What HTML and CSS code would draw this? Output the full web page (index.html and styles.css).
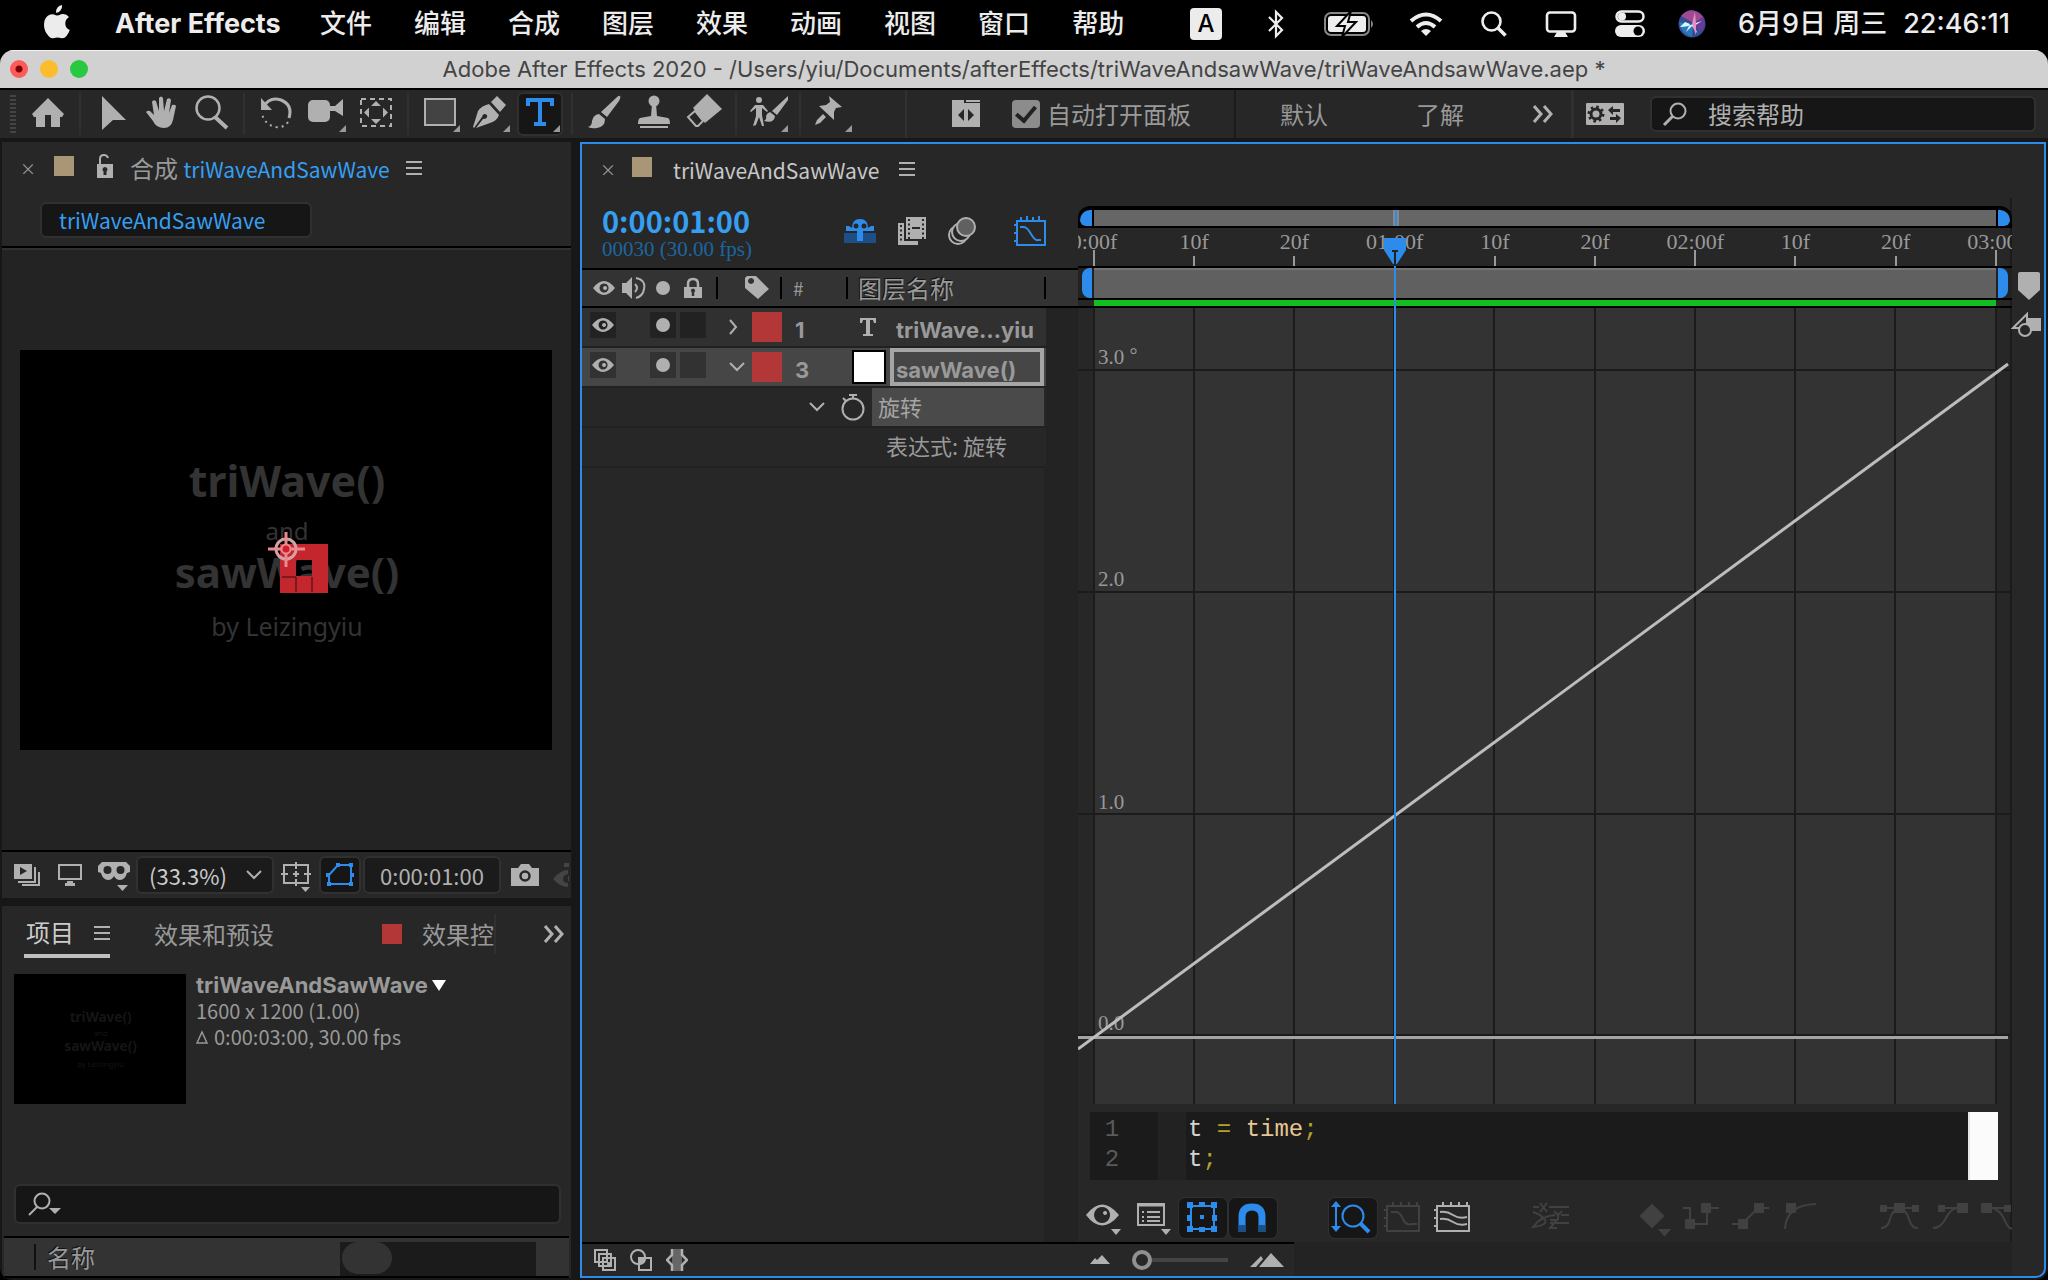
FILE: index.html
```html
<!DOCTYPE html>
<html lang="zh-CN">
<head>
<meta charset="utf-8">
<title>Adobe After Effects 2020</title>
<link rel="stylesheet" href="styles.css">
</head>
<body>
<nav class="menubar" aria-label="系统菜单">
  <svg class="apple" width="28" height="34" viewBox="0 0 28 34"><path d="M19 0q.5 3-1.500 5.500Q15.500 8 13 7.800q-.3-3 1.500-5.300Q16.500.2 19 0zM14 10.500q1.500 0 4-1.200 5-1.300 8 2.700-4 2.500-3.700 7 .4 4.500 4.500 6-1.300 3.500-3.300 6-2 2.500-4.500 2.300-3-.9-4.500-.9t-4.500.9q-2.500.2-4.500-2.300Q1 26 1 20q0-6 3.500-9 3-2.500 6.500-1.500 2 1 3 1z" fill="#ececec"/></svg>
  <a class="app-name" href="#">After Effects</a>
  <div class="menus">
    <a href="#">文件</a><a href="#">编辑</a><a href="#">合成</a><a href="#">图层</a><a href="#">效果</a><a href="#">动画</a><a href="#">视图</a><a href="#">窗口</a><a href="#">帮助</a>
  </div>
  <div class="status">
    <span class="input-source">A</span>
    <svg width="20" height="30" viewBox="0 0 20 30" fill="none" stroke="#eee" stroke-width="2.200"><path d="M3 8l13 13-6 6V3l6 6L3 22"/></svg>
    <svg class="battery" width="52" height="26" viewBox="0 0 52 26"><rect x="1" y="2" width="44" height="22" rx="6" fill="none" stroke="#888" stroke-width="2"/><rect x="4" y="5" width="38" height="16" rx="3" fill="#eee"/><path d="M47 9q4 4 0 8z" fill="#888"/><path d="M27 0L13 15h8l-3 11L32 11h-8z" fill="#eee" stroke="#000" stroke-width="2"/></svg>
    <svg width="34" height="24" viewBox="0 0 34 24" fill="none" stroke="#eee" stroke-width="4"><path d="M2 9q15-13 30 0M8 15q9-8 18 0"/><path d="M12 19q5-4 10 0l-5 5z" fill="#eee" stroke="none"/></svg>
    <svg width="26" height="26" viewBox="0 0 26 26" fill="none" stroke="#eee" stroke-width="2.600"><circle cx="10.500" cy="10.500" r="9"/><path d="M17 17l7.500 7.500" stroke-width="3.500"/></svg>
    <svg width="32" height="26" viewBox="0 0 32 26"><rect x="2" y="1.500" width="28" height="19" rx="3" fill="none" stroke="#eee" stroke-width="2.600"/><path d="M12 21h8l3 5H9z" fill="#eee"/></svg>
    <svg class="control" width="30" height="28" viewBox="0 0 30 28"><rect x="1.500" y="1.500" width="27" height="10" rx="5" fill="none" stroke="#eee" stroke-width="2.500"/><circle cx="7" cy="6.500" r="4" fill="#eee"/><rect x="0" y="15" width="30" height="12" rx="6" fill="#eee"/><circle cx="23" cy="21" r="4.500" fill="#000"/></svg>
    <svg width="28" height="28" viewBox="0 0 28 28"><circle cx="14" cy="14" r="13.500" fill="#354c92"/><path d="M3 6Q14-6 25 7L16 13z" fill="#a04a92"/><path d="M25 7q4 8-3 15l-7-8z" fill="#6a3a94"/><path d="M1 12q2 12 13 15l1-12z" fill="#2878bc"/><path d="M2 17q8 0 13-3l9-3-8 5 4 8-6-8-6 6 4-8-5-2z" fill="#d8fbff"/><path d="M14 14L17 2l1 12 0 11z" fill="#e690c8"/></svg>
    <span class="clock">6月9日 周三</span>
    <span class="clock time">22:46:11</span>
  </div>
</nav>

<div class="window">
  <header class="titlebar">
    <button class="light red" aria-label="关闭"></button><button class="light yellow" aria-label="最小化"></button><button class="light green" aria-label="缩放"></button>
    <h1>Adobe After Effects 2020 - /Users/yiu/Documents/afterEffects/triWaveAndsawWave/triWaveAndsawWave.aep *</h1>
  </header>

  <div class="toolbar">
    <span class="grip"></span>
    <button class="tool" aria-label="主页"><svg viewBox="0 0 40 40"><path d="M20 4l16 16-2 3h-2v10h-9V21h-6v12H8V23H6l-2-3z"/></svg></button>
    <span class="sep"></span>
    <button class="tool" aria-label="选取"><svg viewBox="0 0 40 40"><path d="M10 2l24 24H21L10 36z"/></svg></button>
    <button class="tool" aria-label="手形"><svg viewBox="0 0 40 40"><path d="M4 18q3-3 6 1l2 2L10 8q1-3 4-1l3 10V4q2-3 4 0l1 13 3-12q3-2 4 1l-2 13 3-8q3-1 4 1l-3 14q-2 8-9 8-8 0-11-7z"/></svg></button>
    <button class="tool" aria-label="缩放"><svg viewBox="0 0 40 40" class="line"><circle cx="16" cy="14" r="11.500" stroke-width="2.500"/><path d="M23 23l12 11" stroke-width="4"/></svg></button>
    <span class="sep"></span>
    <button class="tool" aria-label="旋转"><svg viewBox="0 0 40 40"><path d="M7 13Q14 2 25 6q12 5 8 18" fill="none" stroke="#b0b0b0" stroke-width="3"/><path d="M5 4v12h11z"/><path d="M32 28q-4 6-12 5Q9 31 6 20" fill="none" stroke="#b0b0b0" stroke-width="2" stroke-dasharray="2 4"/></svg></button>
    <button class="tool" aria-label="摄像机"><svg viewBox="0 0 40 40"><rect x="2" y="6" width="22" height="22" rx="5"/><path d="M24 12h5l8-7v17l-8-5h-5z"/><path class="fly" d="M40 31v7h-7z"/></svg></button>
    <button class="tool" aria-label="向后平移"><svg viewBox="0 0 40 40"><rect x="5" y="5" width="30" height="27" fill="none" stroke="#b0b0b0" stroke-width="2" stroke-dasharray="5 4"/><path d="M20 7l5 5H15zM20 30l5-5H15zM8 18.500l5-5v10zM32 18.500l-5-5v10z"/></svg></button>
    <span class="sep"></span>
    <button class="tool" aria-label="矩形"><svg viewBox="0 0 40 40"><rect x="5" y="5" width="30" height="26" fill="#434343" stroke="#b0b0b0" stroke-width="2"/><path class="fly" d="M40 31v7h-7z"/></svg></button>
    <button class="tool" aria-label="钢笔"><svg viewBox="0 0 40 40"><path d="M3 33L8 17q3-5 11-7l10 11q-2 6-9 8L6 34l7-9q5 0 4-4-4-3-5 2L4 34z"/><path d="M21 8l6-6 9 9-6 7z"/><path class="fly" d="M40 31v7h-7z"/></svg></button>
    <button class="tool active" aria-label="文字"><svg viewBox="0 0 40 40"><path d="M6 4h28v8h-4V8h-8v20h4v4H14v-4h4V8h-8v4H6z" fill="#2d8ceb"/><path class="fly" d="M40 31v7h-7z"/></svg></button>
    <span class="sep"></span>
    <button class="tool" aria-label="画笔"><svg viewBox="0 0 40 40"><path d="M36 2q1 1-1 5L23 23l-6-5L32 4q3-3 4-2zM15 20l6 5q0 8-8 9-5 1-9-1 4-1 4-6 1-6 7-7z"/></svg></button>
    <button class="tool" aria-label="仿制图章"><svg viewBox="0 0 40 40"><circle cx="20" cy="7" r="5.500"/><path d="M18 10h4l1 12 11 2q2 1 2 6H4q0-5 2-6l11-2zM6 32h28v2H6z"/></svg></button>
    <button class="tool" aria-label="橡皮擦"><svg viewBox="0 0 40 40"><path d="M23 0l15 15-17 14L9 14z"/><path d="M11 17l8 10-5 5h-2l-8-9z" fill="none" stroke="#b0b0b0" stroke-width="2"/></svg></button>
    <span class="sep"></span>
    <button class="tool" aria-label="Roto 笔刷"><svg viewBox="0 0 40 40"><circle cx="11" cy="6" r="3"/><path d="M2 17l5-6h8l5 6-1 1-5-4v7l2 11h-2l-3-9-3 8-3 1 3-10v-8l-5 4zM40 2v4L29 21l-5-4zM22 18l5 4q-1 8-11 5 3-2 2-5 1-3 4-4z"/><path class="fly" d="M40 31v7h-7z"/></svg></button>
    <span class="sep"></span>
    <button class="tool" aria-label="人偶位置控点"><svg viewBox="0 0 40 40"><path d="M17 2l13 11-6 1-2 4 0 8L7 12l7-1 4-3zM3 31l2-5 6-6 3 3-6 6z"/><path class="fly" d="M40 31v7h-7z"/></svg></button>
    <span class="sep wide"></span>
    <button class="tool small" aria-label="面板"><svg viewBox="0 0 40 40"><path d="M6 6h12v3h16v24H6zM20 6h14v2H20z"/><path d="M18 15v12l-6-6zM22 15v12l6-6z" fill="#272727"/></svg></button>
    <label class="check"><input type="checkbox" checked><span>自动打开面板</span></label>
    <div class="workspaces">
      <button>默认</button><button class="learn">了解</button>
      <button aria-label="更多"><svg width="22" height="18" viewBox="0 0 22 18" fill="none" stroke="#b0b0b0" stroke-width="3"><path d="M2 1l7 8-7 8M12 1l7 8-7 8"/></svg></button>
    </div>
    <button class="sync" aria-label="同步设置"><svg width="38" height="22" viewBox="0 0 38 22"><rect width="38" height="22" rx="1" fill="#b0b0b0"/><circle cx="10" cy="11" r="5" fill="none" stroke="#272727" stroke-width="3"/><circle cx="10" cy="11" r="7" fill="none" stroke="#272727" stroke-width="3" stroke-dasharray="2.500 3"/><path d="M22 7l5-4v3h7v3h-7v3zM35 15l-5-4v3h-6v3h6v3z" fill="#272727"/></svg></button>
    <label class="help-search"><svg width="26" height="26" viewBox="0 0 26 26" fill="none" stroke="#b0b0b0"><circle cx="16" cy="10" r="7.500" stroke-width="2"/><path d="M11 15L2 24" stroke-width="3"/></svg><input type="text" value="搜索帮助" aria-label="搜索帮助"></label>
  </div>

  <main class="workspace">
    <div class="left">
      <section class="panel comp">
        <div class="tabs">
          <button class="close" aria-label="关闭">×</button><span class="swatch tan"></span>
          <svg class="lock" width="18" height="26" viewBox="0 0 18 26"><path d="M4 12V6q0-4 4-4 3 0 4 3" fill="none" stroke="#b0b0b0" stroke-width="2"/><path d="M1 11h16v14H1z" fill="#b0b0b0"/><path d="M9 14a2.500 2.500 0 0 1 1.500 4.500V22h-3v-3.500A2.500 2.500 0 0 1 9 14z" fill="#272727"/></svg>
          <span class="tab-title">合成 <b>triWaveAndSawWave</b></span>
          <button class="burger" aria-label="面板菜单"></button>
        </div>
        <div class="crumbs"><button>triWaveAndSawWave</button></div>
        <div class="viewer">
          <svg class="canvas" viewBox="0 0 532 400" font-family="Noto Sans" text-anchor="middle">
            <rect width="532" height="400"/>
            <g fill="#333">
              <text x="267" y="147" font-size="43" font-weight="700">triWave()</text>
              <text x="267" y="190" font-size="24">and</text>
              <text x="267" y="238" font-size="42" font-weight="700">sawWave()</text>
              <text x="267" y="286" font-size="25">by Leizingyiu</text>
            </g>
            <path d="M260 194h48v49h-48zM276 210v16h16v-16z" fill="#c4262e" fill-rule="evenodd"/>
            <path d="M262 227h14v15M292 227v15" fill="none" stroke="#3a0a0c"/>
            <g fill="none" stroke="#e88a8e" stroke-width="2"><circle cx="266" cy="199" r="10" stroke="#d8a0a2" stroke-width="3"/><circle cx="266" cy="199" r="4.500" fill="#d01f28"/><path d="M266 182v13M266 203v14M248 199h13M271 199h14" stroke-width="3"/></g>
          </svg>
        </div>
        <div class="viewer-bar">
          <button aria-label="始终预览"><svg width="26" height="22" viewBox="0 0 26 22"><path d="M0 0h18v15H0z" fill="#b0b0b0"/><path d="M6 3l7 4-7 4z" fill="#272727"/><path d="M20 4h1v14H4M25 8v13H8" fill="none" stroke="#b0b0b0" stroke-width="2"/></svg></button>
          <button aria-label="主查看器"><svg width="24" height="22" viewBox="0 0 24 22"><path d="M1 1h22v14H1z" fill="none" stroke="#b0b0b0" stroke-width="2"/><path d="M9 17h6v2h2v3H7v-3h2z" fill="#b0b0b0"/></svg></button>
          <button class="drop goggles" aria-label="3D 眼镜"><svg width="32" height="30" viewBox="0 0 32 30"><path d="M4 0h24l4 4v6l-3 1q-2 7-7 7-4 0-6-4-2 4-6 4-5 0-7-7l-3-1V4z" fill="#b0b0b0"/><circle cx="9.500" cy="8" r="4" fill="#272727"/><circle cx="22.500" cy="8" r="4" fill="#272727"/><path d="M19 23h11l-5.500 6z" fill="#b0b0b0"/></svg></button>
          <label class="zoom"><select aria-label="放大率"><option>(33.3%)</option></select><svg width="16" height="10" viewBox="0 0 16 10" fill="none" stroke="#b0b0b0" stroke-width="2"><path d="M1 1l7 7 7-7"/></svg></label>
          <button class="drop" aria-label="网格和参考线"><svg width="30" height="32" viewBox="0 0 30 32" fill="none" stroke="#b0b0b0" stroke-width="2"><path d="M3 3h24v18H3zM15 0v7M15 17v7M0 12h7M23 12h7M12 12h6M15 9v6"/><path d="M20 25h9l-4.500 5z" fill="#b0b0b0" stroke="none"/></svg></button>
          <button class="boxed" aria-label="蒙版可见性"><svg width="28" height="24" viewBox="0 0 28 24"><path d="M3 21V12L12 2h13v19z" fill="none" stroke="#2d8ceb" stroke-width="2"/><path d="M10 0h4v4h-4zM23 0h4v4h-4zM0 10h4v4H0zM24 10h4v4h-4zM1 19h4v4H1zM23 19h4v4h-4z" fill="#2d8ceb"/></svg></button>
          <button class="preview-time">0:00:01:00</button>
          <button aria-label="快照"><svg width="28" height="22" viewBox="0 0 28 22"><path d="M0 4h7l3-4h8l3 4h7v18H0z" fill="#b0b0b0"/><circle cx="14" cy="12" r="4.500" fill="none" stroke="#272727" stroke-width="2.500"/></svg></button>
          <svg class="faded" width="16" height="24" viewBox="0 0 16 24"><path d="M0 16q7-9 15-9v4q-5 1-5 5t5 4v4Q7 24 0 16zM11 0h5v4h-5zM15 13h1v5h-1z" fill="#444"/></svg>
        </div>
      </section>

      <section class="panel project">
        <div class="project-tabs">
          <button class="ptab current">项目 <span class="burger"></span></button>
          <button class="ptab">效果和预设</button>
          <button class="ptab clipped"><span class="swatch red"></span>效果控</button>
          <button class="more" aria-label="更多"><svg width="22" height="18" viewBox="0 0 22 18" fill="none" stroke="#b0b0b0" stroke-width="3"><path d="M2 1l7 8-7 8M12 1l7 8-7 8"/></svg></button>
        </div>
        <div class="info">
          <svg class="thumb" viewBox="0 0 532 400" font-family="Noto Sans" text-anchor="middle"><rect width="532" height="400"/><g fill="#151515"><text x="268" y="147" font-size="42" font-weight="700">triWave()</text><text x="268" y="190" font-size="24">and</text><text x="268" y="238" font-size="42" font-weight="700">sawWave()</text><text x="268" y="286" font-size="24">by Leizingyiu</text></g></svg>
          <div class="meta"><strong>triWaveAndSawWave<i class="caret"></i></strong><span>1600 x 1200 (1.00)</span><span><svg width="12" height="14" viewBox="0 0 12 14"><path d="M1 13L6 2l5 11z" fill="none" stroke="#999" stroke-width="1.500"/></svg> 0:00:03:00, 30.00 fps</span></div>
        </div>
        <label class="project-search"><svg width="34" height="24" viewBox="0 0 34 24" fill="none" stroke="#b0b0b0" stroke-width="2"><circle cx="14" cy="9" r="7.500"/><path d="M9 15l-8 8"/><path d="M21 16h12l-6 6z" fill="#b0b0b0" stroke="none"/></svg><input type="text" aria-label="搜索项目"></label>
        <div class="list-head"><span>名称</span><div class="scroll"><i></i></div></div>
      </section>
    </div>

    <section class="panel timeline">
      <div class="tabs">
        <button class="close" aria-label="关闭">×</button><span class="swatch tan"></span>
        <span class="tab-title light-title"><b>triWaveAndSawWave</b></span>
        <button class="burger" aria-label="面板菜单"></button>
      </div>
      <div class="tl-body">
        <div class="layers">
          <div class="tl-controls">
            <div class="timecode"><button>0:00:01:00</button><span>00030 (30.00 fps)</span></div>
            <div class="tl-switches">
              <button aria-label="消隐"><svg width="32" height="26" viewBox="0 0 32 26"><path d="M0 15h32v10H0z" fill="#1b4f86"/><path d="M2 8h3l3 2Q8 1 16 1t8 9l3-2h3v5H2z" fill="#2d8ceb"/><path d="M13 11h6v12h-6z" fill="#2d8ceb"/><circle cx="12" cy="8" r="2.500" fill="#272727"/><circle cx="20" cy="8" r="2.500" fill="#272727"/></svg></button>
              <button aria-label="帧混合"><svg width="28" height="28" viewBox="0 0 28 28"><path d="M8 0h20v22H8zM0 6h6v18h14v4H0z" fill="#b0b0b0"/><path d="M11 2v20M25 2v20M3 8v18" stroke="#272727" stroke-width="2" stroke-dasharray="2 2.500"/><path d="M14 11h8" stroke="#272727" stroke-width="2"/></svg></button>
              <button aria-label="运动模糊"><svg width="28" height="28" viewBox="0 0 28 28" fill="#272727" stroke="#b0b0b0" stroke-width="2"><circle cx="10" cy="18" r="9"/><circle cx="13" cy="15" r="9"/><circle cx="18" cy="10" r="9" fill="#606060"/></svg></button>
              <button aria-label="图表编辑器"><svg width="32" height="30" viewBox="0 0 32 30" fill="none" stroke="#2d8ceb" stroke-width="2"><path d="M3 5h28v24H3zM6 11h4q3 0 7 7t7 6h3M7 5V1M13 5V0M19 5V1M25 5V0M3 9H0M3 17H0M3 25H0"/></svg></button>
            </div>
          </div>
          <table>
            <colgroup><col class="c-av"><col class="c-label"><col class="c-num"><col class="c-name"><col></colgroup>
            <thead><tr>
              <th><div class="av-head">
                <svg width="22" height="14" viewBox="0 0 22 14"><use href="#eye"/></svg>
                <svg width="24" height="22" viewBox="0 0 24 22"><path d="M0 6h4l6-6v22l-6-6H0z" fill="#b0b0b0"/><path d="M13 7q4 4 0 8M14 1q10 2 8 11-1 7-8 9" fill="none" stroke="#b0b0b0" stroke-width="2"/></svg>
                <i class="dot"></i>
                <svg width="18" height="22" viewBox="0 0 18 22"><path d="M4 10V7q0-5 5-5t5 5v3" fill="none" stroke="#b0b0b0" stroke-width="2.500"/><path d="M0 10h18v11H0z" fill="#b0b0b0"/><path d="M9 11.500a2.200 2.200 0 0 1 1.200 4V19H7.800v-3.500a2.200 2.200 0 0 1 1.200-4z" fill="#333"/></svg>
              </div></th>
              <th class="tag"><svg width="24" height="24" viewBox="0 0 24 24"><path d="M0 2l2-2h9l13 13-11 10L0 12zM6 2a3 3 0 1 0 .1 0z" fill="#b0b0b0" fill-rule="evenodd"/></svg></th>
              <th class="num">#</th><th class="name">图层名称</th><th></th>
            </tr></thead>
            <tbody>
              <tr class="layer">
                <td><div class="av"><span class="cell"><svg width="22" height="14" viewBox="0 0 22 14"><path id="eye" d="M0 7q11-14 22 0-11 14-22 0zM11 2.500a4.500 4.500 0 1 0 .1 0zM12 5a2 2 0 1 0 .1 0z" fill="#b0b0b0" fill-rule="evenodd"/></svg></span><span class="cell solo"><i class="dot"></i></span><span class="cell"></span></div></td>
                <td><div class="label"><svg width="10" height="16" viewBox="0 0 10 16" fill="none" stroke="#b0b0b0" stroke-width="2"><path d="M1 1l6 7-6 7"/></svg><i class="color"></i></div></td>
                <td class="num">1</td>
                <td><div class="lname"><span class="kind"><svg width="16" height="18" viewBox="0 0 16 18"><path d="M0 0h16v5h-2l-1-3h-3v14h3v2H3v-2h3V2H3L2 5H0z" fill="#b0b0b0"/></svg></span><span class="ltext">triWave…yiu</span></div></td><td class="off"></td>
              </tr>
              <tr class="layer selected">
                <td><div class="av"><span class="cell"><svg width="22" height="14" viewBox="0 0 22 14"><use href="#eye"/></svg></span><span class="cell solo"><i class="dot"></i></span><span class="cell"></span></div></td>
                <td><div class="label open"><svg width="16" height="10" viewBox="0 0 16 10" fill="none" stroke="#b0b0b0" stroke-width="2"><path d="M1 1l7 7 7-7"/></svg><i class="color"></i></div></td>
                <td class="num">3</td>
                <td><div class="lname"><span class="kind solid"></span><span class="ltext framed">sawWave()</span></div></td><td class="off"></td>
              </tr>
              <tr class="prop">
                <td colspan="4"><div class="prop-row"><svg width="16" height="10" viewBox="0 0 16 10" fill="none" stroke="#b0b0b0" stroke-width="2"><path d="M1 1l7 7 7-7"/></svg><svg width="24" height="28" viewBox="0 0 24 28" fill="none" stroke="#b0b0b0" stroke-width="2"><circle cx="12" cy="16" r="10.500"/><path d="M8 2h8M12 2v4M2 5l3 3"/></svg><span>旋转</span></div></td><td class="off"></td>
              </tr>
              <tr class="prop"><td colspan="4"><div class="expr">表达式: 旋转</div></td><td class="off"></td></tr>
            </tbody>
          </table>
          <div class="layers-empty"></div>
          <div class="tl-foot">
            <button aria-label="图层开关"><svg width="22" height="22" viewBox="0 0 22 22" fill="#272727" stroke="#b0b0b0" stroke-width="2"><path d="M1 1h12v12H1zM5 5h12v12H5zM9 9h12v12H9z"/><circle cx="15" cy="15" r="1.500" fill="#b0b0b0" stroke-width="1"/></svg></button>
            <button aria-label="转换控制"><svg width="22" height="22" viewBox="0 0 22 22" fill="none" stroke="#b0b0b0" stroke-width="2"><circle cx="8" cy="8" r="7"/><path d="M9 9h12v12H9z"/><path d="M9 9h6q0 6-6 6z" fill="#b0b0b0"/></svg></button>
            <button aria-label="入点出点"><svg width="22" height="22" viewBox="0 0 22 22"><path d="M6 0h10v22H6z" fill="#666"/><path d="M6 0v6l-5 5 5 5v6M16 0v6l5 5-5 5v6" fill="none" stroke="#b0b0b0" stroke-width="2.500"/></svg></button>
          </div>
        </div>

        <div class="graph">
          <div class="navigator"><i class="handle"></i><div class="nav-bar"><i class="nav-now" style="left:33.330%"></i></div><i class="handle end"></i></div>
          <div class="ruler"><div class="ruler-scale">
            <span class="major" style="left:0%">0:00f</span><span style="left:11.110%">10f</span><span style="left:22.220%">20f</span><span class="major" style="left:33.330%">01:00f</span><span style="left:44.440%">10f</span><span style="left:55.550%">20f</span><span class="major" style="left:66.660%">02:00f</span><span style="left:77.770%">10f</span><span style="left:88.880%">20f</span><span class="major" style="left:100%">03:00f</span>
          </div></div>
          <div class="workarea"><i class="handle"></i><div class="work-bar"></div><i class="handle end"></i></div>
          <div class="cache"></div>
          <div class="plot">
            <svg viewBox="0 0 934 796" preserveAspectRatio="none">
              <path d="M16 0h902v796H16z" fill="#333"/>
              <path d="M16 0v796M116 0v796M216 0v796M316 0v796M416 0v796M517 0v796M617 0v796M717 0v796M817 0v796M918 0v796M0 62h934M0 284h934M0 506h934M0 727h934" stroke="#1b1b1b" stroke-width="2" fill="none"/>
            </svg>
            <span class="value" style="top:6.200%">3.0 <sup>°</sup></span><span class="value" style="top:34.100%">2.0</span><span class="value" style="top:62%">1.0</span><span class="value" style="top:89.800%">0.0</span>
            <svg viewBox="0 0 934 796" preserveAspectRatio="none"><path d="M0 729.500h930" stroke="#a5a3a4" stroke-width="3"/><path d="M0 741L930 56" stroke="#bdbdbd" stroke-width="3"/></svg>
          </div>
          <div class="playhead-track"><svg class="marker" width="22" height="28" viewBox="0 0 22 28"><path d="M0 0h22v12L13 26h-4L0 12z" fill="#2d8ceb"/><path d="M8 13h6M11 13v15" stroke="#222" stroke-width="2"/></svg></div>
          <div class="editor">
            <pre class="gutter">1
2</pre><pre class="code">t <i>=</i> <b>time</b><i>;</i>
t<i>;</i></pre><div class="code-scroll"></div>
          </div>
          <div class="graph-tools">
            <button class="g" aria-label="显示属性"><svg viewBox="0 0 50 40"><path d="M9 17q16-21 33 0-17 21-33 0zM25 9a8 8 0 1 0 .1 0zM28 13a2 2 0 1 0 .1 0z" fill="#b0b0b0" fill-rule="evenodd"/><path d="M34 31h10l-5 6z" fill="#b0b0b0"/></svg></button>
            <button class="g" aria-label="图表类型"><svg viewBox="0 0 50 40" fill="none" stroke="#b0b0b0" stroke-width="2"><path d="M11 6h26v21H11zM11 6h26" /><path d="M15 14h2M20 14h13M15 19h2M20 19h13M15 23h2M20 23h13"/><path d="M11 7h26" stroke-width="3"/><path d="M34 31h10l-5 6z" fill="#b0b0b0" stroke="none"/></svg></button>
            <button class="g on" aria-label="变换框"><svg viewBox="0 0 50 40"><path d="M14 8h23v23H14z" fill="none" stroke="#2d8ceb" stroke-width="2"/><path d="M10 4h6v6h-6zM22 4h6v5h-6zM34 4h6v6h-6zM10 17h5v6h-5zM35 17h5v6h-5zM10 28h6v6h-6zM22 29h6v5h-6zM34 28h6v6h-6zM23 17h4v4h-4z" fill="#2d8ceb"/></svg></button>
            <button class="g on" aria-label="对齐"><svg viewBox="0 0 50 40"><path d="M15 27V19q0-10 10-10t10 10v8" fill="none" stroke="#2d8ceb" stroke-width="7"/><path d="M11 27h8v7h-8zM31 27h8v7h-8z" fill="#1b4f86"/></svg></button>
            <span class="gap50"></span>
            <button class="g on" aria-label="自动缩放"><svg viewBox="0 0 50 40" fill="none" stroke="#2d8ceb"><circle cx="26" cy="18" r="10.500" stroke-width="2"/><path d="M33 25l9 9" stroke-width="4"/><path d="M9 7v24" stroke-width="2"/><path d="M9 3l5 6H4zM9 34l5-6H4z" fill="#2d8ceb" stroke="none"/></svg></button>
            <button class="g dim" aria-label="适合选择"><svg viewBox="0 0 50 40"><use href="#chart"/><path d="M14 14h5q4 0 7 7t9 5h5"/></svg></button>
            <button class="g" aria-label="适合所有"><svg viewBox="0 0 50 40" fill="none" stroke="#b0b0b0" stroke-width="2"><path id="chart" d="M10 8h32v25H10zM16 8V4M24 8V4M32 8V4M40 8V4M10 12H7M10 20H7M10 28H7"/><path d="M13 14q7-1 13 3t14 2M13 21q7-1 13 3t14 2"/></svg></button>
            <span class="gap50"></span>
            <button class="g dim" aria-label="单独尺寸"><svg viewBox="0 0 50 40"><path d="M6 9h6M22 9h20M34 17h8M23 25h19M6 14q9 3 12 8t-12 7Q14 18 28 17"/><path d="M13 5l7 9M20 5l-7 9M27 13l4 4 4-4M31 17v5M23 22h7l-7 8h7"/></svg></button>
            <span class="gap50"></span>
            <button class="g dim" aria-label="编辑关键帧"><svg viewBox="0 0 50 40"><path d="M25 7l11 11-11 11-11-11zM33 32h9l-4.500 5z" fill="#414141"/></svg></button>
            <button class="g dim" aria-label="定格"><svg viewBox="0 0 50 40"><path d="M6 10h7v16h17V10h12"/><path d="M9 22h8v8H9zM25 6h8v8h-8z" fill="#414141"/></svg></button>
            <button class="g dim" aria-label="线性"><svg viewBox="0 0 50 40"><path d="M5 26h10l16-16h11"/><path d="M12 22h8v8h-8zM28 6h8v8h-8z" fill="#414141"/></svg></button>
            <button class="g dim" aria-label="自动贝塞尔"><svg viewBox="0 0 50 40"><path d="M8 31Q9 7 39 6"/><path d="M10 6h8v8h-8z" fill="#414141"/></svg></button>
            <span class="gap50"></span>
            <button class="g dim" aria-label="缓动"><svg viewBox="0 0 50 40"><path d="M5 10h35M4 30q7 0 9-9t9-10q7 0 10 10t9 9"/><path d="M18 6h9v8h-9zM4 8h5v5H4zM36 8h5v5h-5z" fill="#414141"/></svg></button>
            <button class="g dim" aria-label="缓入"><svg viewBox="0 0 50 40"><path d="M14 10h20M6 30q8 0 13-10t12-10"/><path d="M31 6h9v8h-9zM12 8h5v5h-5z" fill="#414141"/></svg></button>
            <button class="g dim" aria-label="缓出"><svg viewBox="0 0 50 40"><path d="M8 10h24M16 10q8 3 12 13t10 7"/><path d="M5 6h9v8H5zM28 8h5v5h-5z" fill="#414141"/></svg></button>
          </div>
          <div class="graph-foot">
            <div class="zoomer">
              <svg width="20" height="10" viewBox="0 0 20 10"><path d="M0 9l5-6 2 2 5-5 8 9z" fill="#b0b0b0"/></svg>
              <input type="range" min="0" max="100" value="0" aria-label="时间缩放">
              <svg width="34" height="14" viewBox="0 0 34 14"><path d="M9 14L21 0l13 14zM0 14L11 3l2 3-7 8z" fill="#b0b0b0"/></svg>
            </div>
          </div>
        </div>

        <div class="strip">
          <svg width="22" height="28" viewBox="0 0 22 28"><path d="M0 2q0-2 2-2h18q2 0 2 2v16L11 28 0 18z" fill="#b0b0b0"/></svg>
          <svg class="shapes" width="30" height="26" viewBox="0 0 30 26"><path d="M15 6h15v13H18z" fill="#b0b0b0"/><path d="M2 16L16 2v14z" fill="#272727" stroke="#b0b0b0" stroke-width="2"/><circle cx="14" cy="18" r="6" fill="#272727" stroke="#b0b0b0" stroke-width="2"/></svg>
        </div>
      </div>
    </section>
  </main>
</div>
</body>
</html>
```

FILE: styles.css
```css
* { box-sizing: border-box; }
html, body { height: 100%; }
body {
  margin: 0;
  background: #000;
  color: #b0b0b0;
  font: 24px/30px "Noto Sans CJK SC", sans-serif;
  display: flex;
  flex-direction: column;
  overflow: hidden;
}
button, input, select { font: inherit; color: inherit; background: none; border: 0; padding: 0; margin: 0; }
svg { display: block; flex: none; }
a { color: inherit; text-decoration: none; }
i, b { font-style: normal; }

/* System menu bar */
.menubar { flex: none; height: 50px; display: flex; align-items: center; padding: 0 38px 2px 43px; color: #ececec; font: 500 26px/34px Inter, "Noto Sans CJK SC", sans-serif; }
.apple { margin-bottom: 4px; }
.app-name { margin-left: 44px; width: 205px; font-size: 27px; font-weight: 700; white-space: nowrap; }
.menus { display: flex; gap: 42px; }
.status { margin-left: auto; display: flex; align-items: center; gap: 38px; white-space: nowrap; }
.input-source { width: 32px; height: 32px; border-radius: 4px; background: #ececec; color: #000; text-align: center; line-height: 32px; font-size: 24px; margin-right: 6px; }
.battery, .control { margin-right: -5px; }
.clock { margin-left: -6px; font-size: 27px; }
.time { margin-left: -22px; }

/* Application window */
.window { flex: 1; min-height: 0; display: flex; flex-direction: column; background: #171717; border-radius: 14px 14px 12px 12px; overflow: hidden; }
.titlebar { flex: none; height: 40px; display: flex; align-items: center; gap: 12px; padding: 0 0 2px 10px; background: #d1d1d1; border-top: 1px solid #f2f2f2; border-bottom: 2px solid #000; }
.titlebar h1 { flex: 1; margin: 0 100px 0 0; text-align: center; font: 400 22px/30px Inter, sans-serif; color: #444; white-space: nowrap; }
.light { width: 18px; height: 18px; border-radius: 50%; }
.red.light { background: radial-gradient(circle, #7a0008 3px, #fc5b57 4px); }
.yellow { background: #fdbc2e; }
.light.green { background: #28c840; }

.toolbar { flex: none; height: 48px; display: flex; align-items: center; padding: 0 12px 0 10px; background: #272727; }
.grip { width: 6px; height: 38px; margin-right: 7px; background: repeating-linear-gradient(#444 0 2px, #272727 2px 4px); }
.tool { width: 50px; height: 44px; display: flex; align-items: center; justify-content: center; flex: none; }
.tool svg { width: 40px; height: 40px; fill: #b0b0b0; }
.tool .line { fill: none; stroke: #b0b0b0; }
.tool .fly { fill: #999; }
.tool.active { width: 46px; margin: 0 2px; background: #161616; border: 2px solid #303030; border-radius: 6px; }
.sep { flex: none; width: 2px; height: 42px; margin: 0 6px; background: #303030; }
.sep.wide { margin: 0 34px 0 48px; height: 48px; }
.check { display: flex; align-items: center; gap: 7px; margin-left: 21px; padding-right: 43px; height: 48px; border-right: 2px solid #1b1b1b; color: #999; white-space: nowrap; }
.check input { appearance: none; width: 28px; height: 28px; border-radius: 4px; background: #8c8c8c; display: grid; place-items: center; }
.check input:checked::before { content: ""; width: 8px; height: 16px; border: solid #222; border-width: 0 4px 4px 0; transform: rotate(40deg); margin-bottom: 4px; }
.workspaces { display: flex; flex: 1; align-items: center; padding: 0 17px 0 44px; height: 48px; border-right: 3px solid #303030; color: #999; }
.learn { margin: 0 auto 0 88px; }
.sync { margin: 0 26px 0 12px; }
.help-search { flex: none; width: 386px; height: 36px; display: flex; align-items: center; gap: 20px; padding-left: 10px; background: #161616; border: 2px solid #303030; border-radius: 6px; }
.help-search input { flex: 1; min-width: 0; height: 30px; }

/* Workspace */
.workspace { flex: 1; min-height: 0; display: grid; grid-template-columns: 569fr 1466fr; gap: 9px; padding: 4px 2px 2px; }
.left { min-width: 0; display: flex; flex-direction: column; gap: 8px; }
.panel { background: #272727; min-width: 0; display: flex; flex-direction: column; overflow: hidden; }
.comp { flex: 756; }
.project { flex: 372; }
.tabs { flex: none; height: 54px; display: flex; align-items: center; padding: 0 0 2px 18px; white-space: nowrap; }
.close { width: 14px; color: #999; font-size: 16px; }
.swatch { flex: none; width: 20px; height: 20px; }
.tan { background: #a99676; margin: 0 0 4px 20px; }
.swatch.red { background: #b33737; }
.lock { margin: 0 16px 4px 22px; }
.tab-title { color: #999; }
.tab-title b { font-size: 21px; font-weight: 400; color: #369ff2; }
.tab-title.light-title { margin-left: 21px; }
.tab-title.light-title b { color: #c8c8c8; }
.burger { display: inline-block; flex: none; width: 16px; height: 14px; margin-left: 16px; border: solid #b0b0b0; border-width: 2px 0; background: linear-gradient(#b0b0b0, #b0b0b0) center / 100% 2px no-repeat; }
.crumbs { flex: none; height: 52px; padding: 6px 0 0 38px; border-bottom: 2px solid #000; }
.crumbs button { display: block; width: 272px; height: 36px; padding: 0 17px; text-align: left; font-size: 21px; line-height: 28px; color: #369ff2; background: #161616; border: 2px solid #303030; border-radius: 6px; }
.viewer { flex: 1; min-height: 0; display: flex; align-items: center; padding: 0 19px 0 18px; background: #232323; border-top: 2px solid #303030; }
.canvas { width: 100%; }
.viewer-bar { flex: none; height: 48px; display: flex; align-items: center; padding-left: 12px; border-top: 2px solid #000; overflow: hidden; white-space: nowrap; }
.viewer-bar button { flex: none; display: flex; justify-content: center; align-items: center; margin-right: 18px; }
.viewer-bar .drop { margin-right: 8px; padding-top: 6px; }
.viewer-bar .drop.goggles { margin: 0 6px 0 -2px; padding-top: 4px; }
.zoom { flex: none; width: 138px; height: 38px; display: flex; align-items: center; padding: 0 10px 0 11px; margin-right: 7px; border: 2px solid #303030; border-radius: 6px; background: #1b1b1b; }
.zoom select { flex: 1; appearance: none; color: #ccc; font-size: 22px; height: 34px; }
.viewer-bar .boxed { width: 42px; height: 38px; margin: 0 2px 0 0; background: #161616; border: 2px solid #303030; border-radius: 6px; }
.viewer-bar .preview-time { width: 138px; height: 38px; margin-right: 10px; font-size: 22px; background: #1b1b1b; border: 2px solid #303030; border-radius: 6px; }
.viewer-bar .preview-time + button { margin-right: 14px; }

/* Project panel */
.project-tabs { flex: none; height: 60px; display: flex; align-items: center; padding: 0 6px 4px 22px; color: #999; }
.ptab { display: flex; align-items: center; height: 40px; white-space: nowrap; }
.ptab.current { height: 48px; padding: 0 0 0 2px; width: 86px; margin-right: 44px; color: #ccc; border-bottom: 4px solid #c0c0c0; }
.ptab.current .burger { margin: 2px 0 0 20px; }
.ptab.clipped { margin-left: auto; width: 114px; gap: 20px; overflow: hidden; border-right: 2px solid #303030; }
.more { margin-left: 47px; }
.info { flex: 1; display: flex; gap: 10px; padding: 8px 12px; font-size: 20px; line-height: 26px; color: #999; }
.thumb { width: 172px; height: 130px; background: #000; }
.meta { display: flex; flex-direction: column; white-space: nowrap; }
.meta strong { font: 700 22px/26px Inter, sans-serif; display: flex; align-items: center; gap: 4px; margin: -2px 0 0; }
.meta span { display: flex; align-items: center; gap: 6px; }
.caret { border: 7px solid transparent; border-top: 11px solid #fff; border-bottom: 0; }
.project-search { flex: none; height: 40px; margin: 0 10px 12px 12px; padding-left: 12px; display: flex; align-items: center; background: #161616; border: 2px solid #303030; border-radius: 6px; }
.project-search input { flex: 1; }
.list-head { flex: none; height: 42px; margin: 0 2px; border: solid #000; border-width: 2px 0; background: #333; display: flex; align-items: center; justify-content: space-between; padding: 0 33px 0 30px; color: #999; text-shadow: -1px -1px #111; }
.list-head > span { border-left: 2px solid #111; padding-left: 11px; line-height: 26px; }
.scroll { align-self: flex-end; width: 196px; height: 34px; padding: 0 2px; background: #1b1b1b; }
.scroll i { display: block; width: 50px; height: 32px; border-radius: 16px; background: #333; }

/* Timeline panel */
.timeline { border: 2px solid #2d8ceb; border-radius: 0 0 10px 0; }
.timeline .tabs { padding: 0 0 4px 18px; }
.timeline .burger { margin-left: 20px; }
.timeline .tan { margin-left: 18px; }
.tl-body { flex: 1; min-height: 0; display: grid; grid-template-columns: 496px 1fr 32px; }
.layers { min-width: 0; display: flex; flex-direction: column; background: #232323; }
.tl-controls { flex: none; height: 70px; display: flex; justify-content: space-between; padding: 5px 32px 0 20px; background: #272727; }
.timecode { display: flex; flex-direction: column; }
.timecode button { font: 700 29px/34px "Noto Sans CJK SC", sans-serif; color: #369ff2; text-align: left; }
.timecode span { font: 21px/24px "Liberation Serif", serif; color: #1c669f; }
.tl-switches { display: flex; align-items: center; height: 56px; gap: 22px; }
.tl-switches button:last-child { margin-left: 16px; }
table { flex: none; width: 100%; table-layout: fixed; border-collapse: separate; border-spacing: 0; }
.c-av { width: 136px; } .c-label { width: 64px; } .c-num { width: 66px; } .c-name { width: 198px; }
th, td { padding: 0; height: 40px; text-align: left; font-weight: 400; }
th { background: #333; border-top: 2px solid #000; border-bottom: 2px solid #000; color: #999; background-clip: padding-box; }
th:not(:last-child) { background: linear-gradient(#000, #000) right center / 2px 22px no-repeat #333; }
.av-head { display: flex; align-items: center; padding-left: 11px; }
.av-head svg:nth-child(2) { margin: 0 10px 0 7px; }
.av-head svg:last-child { margin-left: 14px; }
.dot { width: 14px; height: 14px; border-radius: 50%; background: #b0b0b0; }
th.tag { padding-left: 27px; }
th.num { padding-left: 11px; font-size: 19px; }
th.name { padding-left: 10px; text-shadow: -1px -1px #111; }
td { background: #272727; border-bottom: 2px solid #212121; }
td.off { background: #232323; border-color: #232323; }
.layer td:not(.off) { background: #303030; }
.layer.selected td:not(.off) { background: #464646; }
.av { display: flex; gap: 4px; padding: 0 0 4px 8px; }
.cell { width: 26px; height: 26px; background: #222; display: grid; place-items: center; }
.selected .cell { background: #323232; }
.solo { margin-left: 30px; }
.label { display: flex; align-items: center; justify-content: space-between; padding-left: 11px; }
.color { width: 30px; height: 30px; background: #b33737; }
td.num, .ltext { font: 700 22px/28px Inter, sans-serif; color: #999; }
td.num { padding: 6px 0 0 13px; }
.lname { display: flex; align-items: center; gap: 4px; padding-left: 4px; height: 38px; margin-right: 2px; }
.kind { flex: none; width: 34px; height: 34px; display: grid; place-items: center; padding-right: 2px; }
.solid { background: #fff; border: 2px solid #000; }
.ltext { flex: 1; min-width: 0; padding: 8px 0 0 6px; height: 38px; white-space: nowrap; }
.framed { border: 4px solid #a5a5a5; padding: 4px 0 0 2px; }
.prop-row { display: flex; align-items: center; height: 38px; padding: 0 2px 0 227px; }
.prop-row svg:nth-child(2) { margin: 0 7px 0 16px; }
.prop-row span { flex: 1; height: 38px; padding: 3px 6px; background: #4a4a4a; font-size: 22px; color: #a5a5a5; }
.expr { padding: 0 0 4px 304px; font-size: 22px; color: #999; }
.layers-empty { flex: 1; margin-right: 34px; background: #272727; }
.tl-foot { flex: none; height: 34px; border-top: 2px solid #000; background: #272727; display: flex; align-items: center; gap: 14px; padding-left: 12px; }

/* Graph editor */
.graph { position: relative; min-width: 0; display: flex; flex-direction: column; padding-top: 8px; }
.navigator { flex: none; height: 22px; display: flex; padding: 2px 0 0; background: #000; border-radius: 12px 12px 0 0; }
.navigator .handle { width: 12px; height: 16px; margin: 2px 2px 0; border-radius: 10px 0 0 6px; background: #2d8ceb; }
.navigator .handle.end { border-radius: 0 10px 6px 0; }
.nav-bar { flex: 1; position: relative; height: 16px; margin-top: 2px; background: #666; }
.nav-now { position: absolute; top: 0; width: 6px; height: 16px; margin-left: -2px; background: linear-gradient(#2d8ceb, #2d8ceb) center / 2px 100% no-repeat #888; }
.ruler { flex: none; height: 38px; padding: 0 16px; overflow: hidden; }
.ruler-scale { position: relative; height: 38px; font: 22px/28px "Liberation Serif", serif; color: #999; }
.ruler-scale span { position: absolute; top: 0; width: 80px; height: 38px; margin-left: -40px; text-align: center; background: linear-gradient(#999, #999) center bottom / 2px 10px no-repeat; }
.ruler-scale .major { background-size: 2px 16px; }
.workarea { flex: none; height: 34px; display: flex; border: solid #000; border-width: 2px 0; background: #222; }
.workarea .handle { width: 10px; height: 30px; margin: 0 2px 0 4px; border-radius: 8px 0 0 8px; background: #2d8ceb; }
.workarea .handle.end { margin: 0 4px 0 2px; border-radius: 0 8px 8px 0; }
.work-bar { flex: 1; background: #606060; border-top: 2px solid #747474; }
.cache { flex: none; height: 8px; padding: 0 16px; border-bottom: 2px solid #000; background: linear-gradient(#12be22, #12be22) content-box; }
.plot { flex: 1; min-height: 0; position: relative; }
.plot svg { position: absolute; inset: 0; width: 100%; height: 100%; }
.value { position: absolute; left: 20px; margin-top: -14px; font: 21px/28px "Liberation Serif", serif; color: #999; }
.value sup { font-size: 20px; line-height: 0; vertical-align: 2px; }
.playhead-track { position: absolute; top: 40px; bottom: 172px; left: 16px; right: 16px; pointer-events: none; background: linear-gradient(#2d8ceb, #2d8ceb) 33.330% 26px / 2px 100% no-repeat; }
.marker { position: absolute; left: 33.330%; margin-left: -11px; }
.editor { flex: none; height: 68px; margin: 8px 14px 0 12px; display: flex; background: #222; font: 24px/30px "Liberation Mono", monospace; }
.editor pre { height: 68px; margin: 0; font: inherit; background: #1b1b1b; }
.editor .gutter { width: 68px; padding: 3px 24px 0 0; margin-right: 28px; text-align: center; color: #5a5a5a; }
.editor .code { flex: 1; padding: 3px 0 0 2px; color: #d5d5d5; }
.code i { color: #b5a22b; } .code b { font-weight: 400; color: #e5c795; }
.code-scroll { width: 30px; background: #fbfbfb; border-left: 2px solid #e8e8e8; }
.graph-tools { flex: none; height: 62px; display: flex; align-items: center; overflow: hidden; padding: 14px 0 0; }
.g { flex: none; width: 50px; height: 40px; }
.g svg { width: 50px; height: 40px; margin-left: -1px; }
.g.on { width: 48px; margin: 0 1px; background: #161616; border-radius: 6px; box-shadow: 0 0 0 1px #303030; }
.g.on svg { margin-left: -2px; }
.g.dim svg { fill: none; stroke: #414141; stroke-width: 2; }
.gap50 { flex: none; width: 50px; }
.graph-foot { flex: none; height: 34px; background: #232323; }
.zoomer { width: 216px; height: 34px; padding-left: 12px; border-top: 2px solid #000; background: #272727; display: flex; align-items: center; gap: 22px; }
.zoomer input { appearance: none; width: 96px; height: 20px; background: linear-gradient(#444, #444) center / 100% 4px no-repeat; }
.zoomer input::-webkit-slider-thumb { appearance: none; width: 20px; height: 20px; border: 4px solid #909090; border-radius: 50%; background: #272727; }
.strip { border-left: 2px solid #1b1b1b; padding: 74px 0 0 6px; margin-left: -2px; }
.strip .shapes { margin: 12px 0 0 -7px; }
```
